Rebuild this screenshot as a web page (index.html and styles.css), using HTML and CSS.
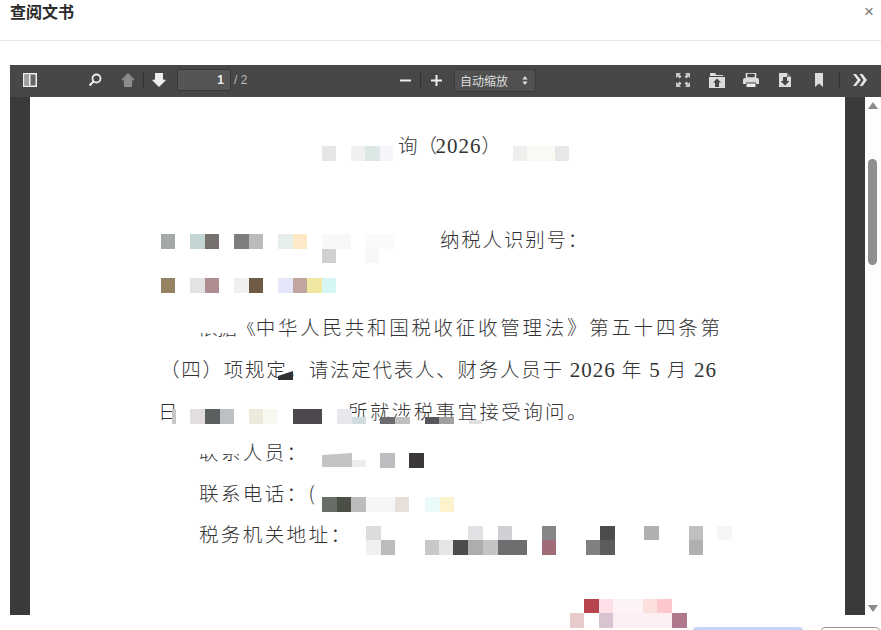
FILE: index.html
```html
<!DOCTYPE html>
<html lang="zh-CN">
<head>
<meta charset="utf-8">
<title>查阅文书</title>
<link rel="stylesheet" href="styles.css">
</head>
<body>
<div class="dialog">
  <header class="head">
    <h1 class="title">查阅文书</h1>
    <span class="close">×</span>
  </header>
  <section class="viewer">
    <div class="toolbar">
      <div class="group left">
        <svg class="ic i-side" viewBox="0 0 14 14"><rect x="0.75" y="0.75" width="12.5" height="12.5" fill="#666" stroke="#eee" stroke-width="1.5"/><rect x="1.5" y="1.5" width="4.5" height="11" fill="#a0a0a0"/><rect x="6" y="1.5" width="1.5" height="11" fill="#f0f0f0"/></svg>
        <svg class="ic i-search" viewBox="0 0 14 14"><circle cx="8.5" cy="5.5" r="4" fill="none" stroke="#eee" stroke-width="1.8"/><path d="M5.5 8.5 1.5 12.5" stroke="#eee" stroke-width="2.2"/></svg>
        <svg class="ic i-up" viewBox="0 0 14 14"><path d="M7 0 14 7 11 7.5V14H3V7.5L0 7Z" fill="#8c8c8c"/></svg>
        <span class="sep s-nav"></span>
        <svg class="ic i-down" viewBox="0 0 14 14"><path d="M3 0H11V6.5L14 7 7 14 0 7 3 6.5Z" fill="#eee"/></svg>
        <span class="pageinput">1</span>
        <span class="pagecount">/ 2</span>
      </div>
      <div class="group center">
        <svg class="ic i-minus" viewBox="0 0 11 11"><rect y="4.5" width="11" height="2" fill="#eee"/></svg>
        <span class="sep s-zoom"></span>
        <svg class="ic i-plus" viewBox="0 0 11 11"><path d="M0 4.5H4.5V0H6.5V4.5H11V6.5H6.5V11H4.5V6.5H0Z" fill="#eee"/></svg>
        <span class="select">自动缩放<svg class="updown" viewBox="0 0 6 10"><path d="M3 0 6 4H0ZM0 6H6L3 10Z" fill="#ddd"/></svg></span>
      </div>
      <div class="group right">
        <svg class="ic i-full" viewBox="0 0 14 14"><path d="M0 0H5L3.5 1.5 5.5 3.5 3.5 5.5 1.5 3.5 0 5ZM14 0V5L12.5 3.5 10.5 5.5 8.5 3.5 10.5 1.5 9 0ZM0 14V9L1.5 10.5 3.5 8.5 5.5 10.5 3.5 12.5 5 14ZM14 14H9L10.5 12.5 8.5 10.5 10.5 8.5 12.5 10.5 14 9Z" fill="#c8c8c8"/></svg>
        <svg class="ic i-open" viewBox="0 0 16 15"><path d="M1 0H6L7.5 2H14V3H1ZM0 4H16V15H0Z" fill="#dcdcdc"/><path d="M8 5.5 12 9.5H10V14H6V9.5H4Z" fill="#474747"/></svg>
        <svg class="ic i-print" viewBox="0 0 16 14"><path d="M3.5 0H12.5V5H3.5Z" fill="none" stroke="#e8e8e8" stroke-width="1.5"/><path d="M2 5H14Q16 5 16 7V11H13V9.5H3V11H0V7Q0 5 2 5Z" fill="#dcdcdc"/><path d="M3.5 10.5H12.5V14H3.5Z" fill="#eee"/></svg>
        <svg class="ic i-save" viewBox="0 0 12 14"><path d="M0 0H8L12 4V14H0Z" fill="#dcdcdc"/><path d="M8 0V4H12Z" fill="#777"/><path d="M4 4H8V8H10.5L6 12.5 1.5 8H4Z" fill="#474747"/></svg>
        <svg class="ic i-mark" viewBox="0 0 8 14"><path d="M0 0H8V14L4 10.5 0 14Z" fill="#dcdcdc"/></svg>
        <span class="sep s-more"></span>
        <svg class="ic i-more" viewBox="0 0 14 12"><path d="M0 0H3L8 6 3 12H0L4.5 6ZM6.5 0H9.5L14 6 9.5 12H6.5L10.5 6Z" fill="#e4e4e4"/></svg>
      </div>
    </div>
    <div class="stage">
      <div class="gutter"></div>
      <div class="page">
        <p class="doc l-title">询<span class="bracket">（</span><span class="num">2026</span><span class="bracket">）</span></p>
        <p class="doc l-id">纳税人识别号：</p>
        <p class="doc l-blank"></p>
        <p class="doc l-para"><span class="tight">依据《</span>中华人民共和国税收征收管理法》第五十四条第</p>
        <p class="doc l-full">（四）项规定，请法定代表人、财务人员于 <span class="num">2026</span> 年 <span class="num">5</span> 月 <span class="num">26</span></p>
        <p class="doc l-day"><span class="day">日</span><span>所就涉税事宜接受询问。</span></p>
        <p class="doc l-item">联系人员：</p>
        <p class="doc l-item">联系电话：(</p>
        <p class="doc l-item">税务机关地址：</p>
      </div>
      <div class="gutter"></div>
      <div class="scroll">
        <svg class="arrow" viewBox="0 0 10 7"><path d="M5 0 10 7H0Z" fill="#8a8a8a"/></svg>
        <div class="thumb"></div>
        <svg class="arrow" viewBox="0 0 10 7"><path d="M0 0H10L5 7Z" fill="#8a8a8a"/></svg>
      </div>
    </div>
  </section>
  <footer class="foot">
    <span class="btn primary"></span>
    <span class="btn plain"></span>
  </footer>
  <svg class="mosaic" viewBox="0 0 881 630" aria-hidden="true">
    <!-- erased text -->
    <rect x="196" y="316" width="44" height="17" fill="#fff"/>
    <rect x="196" y="441" width="44" height="13" fill="#fff"/>
    <rect x="240" y="316" width="24" height="6" fill="#fff"/>
    <!-- title row -->
    <rect x="322" y="146" width="14" height="15" fill="#e6e6e6"/>
    <rect x="351" y="146" width="14" height="15" fill="#f0f0f0"/>
    <rect x="365" y="146" width="15" height="15" fill="#dce8e6"/>
    <rect x="380" y="146" width="13" height="15" fill="#f5f5fa"/>
    <rect x="513" y="146" width="14" height="15" fill="#f0eeec"/>
    <rect x="527" y="146" width="28" height="15" fill="#fafaf5"/>
    <rect x="555" y="146" width="14" height="15" fill="#e6e8e8"/>
    <!-- taxpayer rows -->
    <rect x="161" y="234" width="14" height="15" fill="#a5a8a8"/>
    <rect x="190" y="234" width="15" height="15" fill="#c3d6d4"/>
    <rect x="205" y="234" width="14" height="15" fill="#76706f"/>
    <rect x="234" y="234" width="15" height="15" fill="#7f7d80"/>
    <rect x="249" y="234" width="14" height="15" fill="#bcbaba"/>
    <rect x="278" y="234" width="15" height="15" fill="#e6eeec"/>
    <rect x="293" y="234" width="14" height="15" fill="#fde8c8"/>
    <rect x="322" y="234" width="29" height="15" fill="#f9f8f6"/>
    <rect x="365" y="234" width="30" height="15" fill="#fafafa"/>
    <rect x="322" y="249" width="14" height="14" fill="#d0d0d0"/>
    <rect x="365" y="249" width="14" height="14" fill="#f8f6f6"/>
    <rect x="161" y="278" width="14" height="15" fill="#958261"/>
    <rect x="190" y="278" width="15" height="15" fill="#e3e3e3"/>
    <rect x="205" y="278" width="14" height="15" fill="#ae8e90"/>
    <rect x="234" y="278" width="15" height="15" fill="#efefef"/>
    <rect x="249" y="278" width="14" height="15" fill="#6e5a45"/>
    <rect x="278" y="278" width="15" height="15" fill="#e6e6fa"/>
    <rect x="293" y="278" width="14" height="15" fill="#c0a69f"/>
    <rect x="307" y="278" width="15" height="15" fill="#f0e8a0"/>
    <rect x="322" y="278" width="14" height="15" fill="#d6f6f6"/>
    <!-- body mark -->
    <path d="M278 380V376L293 371V380Z" fill="#333"/>
    <!-- day row -->
    <rect x="172" y="409" width="4" height="15" fill="#c8c8c8"/>
    <rect x="190" y="409" width="15" height="15" fill="#e3dde0"/>
    <rect x="205" y="409" width="15" height="15" fill="#5c5f60"/>
    <rect x="220" y="409" width="14" height="15" fill="#bcc0c2"/>
    <rect x="249" y="409" width="14" height="15" fill="#eceadc"/>
    <rect x="263" y="409" width="15" height="15" fill="#f8f8f0"/>
    <rect x="293" y="409" width="29" height="15" fill="#4d484e"/>
    <rect x="337" y="409" width="15" height="15" fill="#e8e8ec"/>
    <rect x="352" y="417" width="14" height="7" fill="#d0dce0"/>
    <rect x="380" y="417" width="15" height="7" fill="#6c6c70"/>
    <rect x="395" y="417" width="15" height="7" fill="#c0c0c0"/>
    <rect x="425" y="417" width="14" height="7" fill="#58585c"/>
    <rect x="439" y="417" width="15" height="7" fill="#a0a0a0"/>
    <rect x="469" y="420" width="13" height="4" fill="#e0e0e0"/>
    <!-- contact row -->
    <path d="M322 467V455L352 453V467Z" fill="#c4c4c4"/>
    <rect x="352" y="460" width="14" height="7" fill="#eeeeee"/>
    <rect x="380" y="453" width="15" height="15" fill="#bebec2"/>
    <rect x="409" y="453" width="15" height="15" fill="#3c3838"/>
    <!-- phone row -->
    <rect x="322" y="497" width="15" height="15" fill="#676e68"/>
    <rect x="337" y="497" width="14" height="15" fill="#4c4f46"/>
    <rect x="351" y="497" width="15" height="15" fill="#bcbcbe"/>
    <rect x="366" y="497" width="29" height="15" fill="#f6f6f6"/>
    <rect x="395" y="497" width="14" height="15" fill="#e6e0d8"/>
    <rect x="425" y="497" width="15" height="15" fill="#eafafa"/>
    <rect x="440" y="497" width="14" height="15" fill="#fcf2cc"/>
    <!-- address rows -->
    <rect x="366" y="526" width="15" height="14" fill="#dcdcdc"/>
    <rect x="468" y="526" width="15" height="14" fill="#e2e2e6"/>
    <rect x="498" y="526" width="14" height="14" fill="#d0d0d4"/>
    <rect x="542" y="526" width="14" height="14" fill="#868688"/>
    <rect x="600" y="526" width="15" height="14" fill="#4c4c4e"/>
    <rect x="644" y="526" width="15" height="14" fill="#b0b0b0"/>
    <rect x="689" y="526" width="14" height="14" fill="#c0c0c0"/>
    <rect x="717" y="526" width="15" height="14" fill="#f6f6f6"/>
    <rect x="366" y="540" width="15" height="15" fill="#f0f0f0"/>
    <rect x="381" y="540" width="14" height="15" fill="#bcbcbc"/>
    <rect x="425" y="540" width="14" height="15" fill="#c8c8c8"/>
    <rect x="439" y="540" width="14" height="15" fill="#e6e6e6"/>
    <rect x="453" y="540" width="15" height="15" fill="#4c4c4c"/>
    <rect x="468" y="540" width="15" height="15" fill="#aeaeae"/>
    <rect x="483" y="540" width="15" height="15" fill="#c4c4c4"/>
    <rect x="498" y="540" width="29" height="15" fill="#6e6e70"/>
    <rect x="542" y="540" width="14" height="15" fill="#a06c78"/>
    <rect x="586" y="540" width="14" height="15" fill="#808080"/>
    <rect x="600" y="540" width="15" height="15" fill="#5c5c5e"/>
    <rect x="689" y="540" width="14" height="15" fill="#b0b0b0"/>
    <!-- seal row -->
    <rect x="584" y="599" width="15" height="14" fill="#b8444f"/>
    <rect x="599" y="599" width="14" height="14" fill="#fde0e8"/>
    <rect x="613" y="599" width="30" height="14" fill="#fdf2f4"/>
    <rect x="643" y="599" width="14" height="14" fill="#fbe0dc"/>
    <rect x="657" y="599" width="15" height="14" fill="#fdc8cc"/>
    <rect x="570" y="613" width="14" height="15" fill="#e8cccc"/>
    <rect x="599" y="613" width="14" height="15" fill="#d8c4d0"/>
    <rect x="613" y="613" width="59" height="15" fill="#fdf0f4"/>
    <rect x="672" y="613" width="15" height="15" fill="#b0788c"/>
  </svg>
</div>
</body>
</html>
```
FILE: styles.css
```css
* { box-sizing: border-box; }
html, body { margin: 0; height: 100%; overflow: hidden; background: #fff; }
.dialog { position: relative; width: 881px; height: 630px; overflow: hidden; font-family: "Liberation Sans", "Noto Sans CJK SC", sans-serif; }
.head { height: 41px; padding: 0 7px 0 10px; display: flex; justify-content: space-between; align-items: flex-start; border-bottom: 1px solid #e5e5e5; }
.title { margin: 3px 0 0; font-size: 16px; line-height: 20px; font-weight: 700; color: #2b2b2b; }
.close { font-size: 17px; line-height: 24px; color: #777; }
.viewer { margin: 24px 0 0 10px; width: 871px; }
.toolbar { height: 32px; padding-bottom: 2px; background: #474747; display: flex; align-items: center; color: #eee; }
.group { display: flex; align-items: center; }
.left { width: 390px; padding-left: 13px; }
.center { width: 263px; }
.ic { display: block; flex: none; }
.i-side { width: 14px; height: 14px; }
.i-search { width: 14px; height: 14px; margin-left: 51px; }
.i-up { width: 14px; height: 14px; margin-left: 19px; }
.sep { display: block; width: 1px; height: 16px; background: #333; flex: none; }
.s-nav { margin-left: 8px; }
.i-down { width: 14px; height: 14px; margin-left: 8px; }
.pageinput { width: 54px; height: 22px; margin-left: 11px; padding-right: 6px; background: #555; border: 1px solid #383838; border-radius: 2px; text-align: right; font-size: 12px; font-weight: 700; line-height: 20px; color: #eee; }
.pagecount { margin-left: 3px; font-size: 12px; color: #bbb; }
.i-minus { width: 11px; height: 11px; }
.s-zoom { margin-left: 9px; }
.i-plus { width: 11px; height: 11px; margin-left: 10px; }
.select { width: 82px; height: 23px; margin-left: 12px; padding: 0 5px; display: flex; align-items: center; justify-content: space-between; background: #505050; border: 1px solid #3c3c3c; border-radius: 2px; font-size: 12px; color: #ddd; }
.updown { width: 6px; height: 9px; margin-right: 2px; }
.i-full { width: 14px; height: 14px; margin-left: 13px; }
.i-open { width: 16px; height: 15px; margin-left: 19px; }
.i-print { width: 16px; height: 14px; margin-left: 18px; }
.i-save { width: 12px; height: 14px; margin-left: 20px; }
.i-mark { width: 8px; height: 14px; margin-left: 24px; }
.s-more { margin-left: 16px; }
.i-more { width: 14px; height: 12px; margin-left: 13px; }
.stage { display: flex; height: 518px; }
.gutter { width: 20px; background: #3a3a3a; flex: none; }
.page { width: 815px; flex: none; padding: 27px 125px 0 130px; background: #fff; }
.doc { margin: 0; font-family: "Noto Sans CJK SC", sans-serif; font-weight: 300; font-size: 19.5px; line-height: 42px; height: 42px; color: #333; white-space: nowrap; }
.num { font-family: "Liberation Serif", serif; font-size: 21px; letter-spacing: 1px; }
.l-title { padding-left: 238px; }
.bracket { display: inline-block; width: 18px; }
.l-id { margin-top: 52px; padding-left: 280px; letter-spacing: 1.8px; }
.l-blank { height: 46px; }
.l-para { padding-left: 38px; text-align: justify; text-align-last: justify; white-space: normal; }
.tight { letter-spacing: -3px; }
.l-full { text-align: justify; text-align-last: justify; padding-right: 3px; white-space: normal; }
.l-day { display: flex; letter-spacing: 2.4px; height: 41px; line-height: 41px; }
.day { width: 190px; flex: none; margin-left: -2px; }
.l-item { padding-left: 39px; letter-spacing: 2.4px; height: 41px; line-height: 41px; }
.scroll { width: 16px; flex: none; padding: 5px 3px 3px; background: #fdfdfd; display: flex; flex-direction: column; }
.arrow { width: 10px; height: 7px; display: block; flex: none; }
.thumb { flex: none; width: 9px; height: 106px; margin: 50px 0 0; border-radius: 5px; background: #8f8f8f; }
.scroll .arrow:last-child { margin-top: auto; }
.foot { padding: 12px 1px 0 0; display: flex; justify-content: flex-end; gap: 18px; }
.btn { display: block; height: 30px; border-radius: 4px; }
.primary { width: 110px; background: #c6d2f4; }
.plain { width: 59px; border: 1px solid #999; background: #fff; }
.mosaic { position: absolute; left: 0; top: 0; width: 881px; height: 630px; pointer-events: none; }
```
